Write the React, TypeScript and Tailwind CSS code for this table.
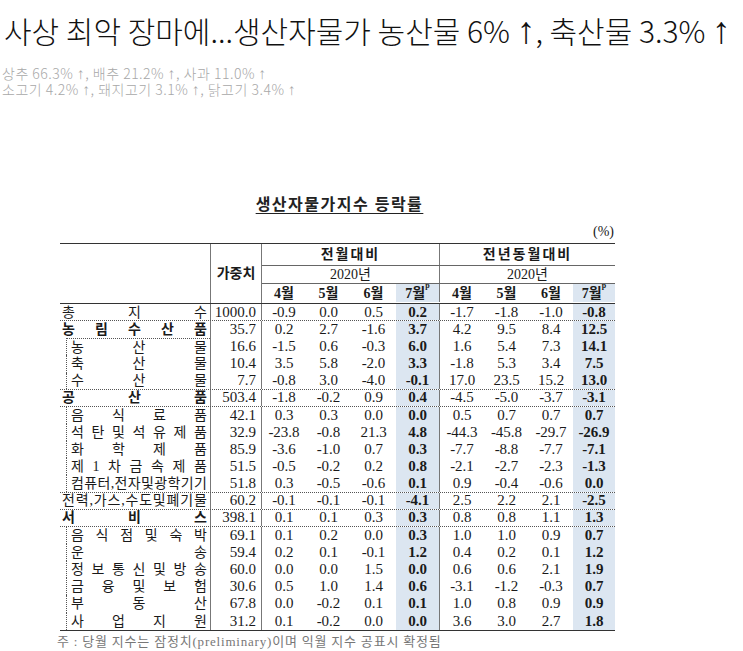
import React from "react";

type Row = {
  label: string;
  kind: "top" | "topbold" | "sub";
  w: string;
  a: string[];
  b: string[];
  sep?: boolean; // full-width dotted line below
  boxTop?: boolean; // label-only dotted top line
};

const rows: Row[] = [
  { label: "총지수", kind: "top", w: "1000.0", a: ["-0.9", "0.0", "0.5", "0.2"], b: ["-1.7", "-1.8", "-1.0", "-0.8"], sep: true },
  { label: "농림수산품", kind: "topbold", w: "35.7", a: ["0.2", "2.7", "-1.6", "3.7"], b: ["4.2", "9.5", "8.4", "12.5"] },
  { label: "농산물", kind: "sub", w: "16.6", a: ["-1.5", "0.6", "-0.3", "6.0"], b: ["1.6", "5.4", "7.3", "14.1"], boxTop: true },
  { label: "축산물", kind: "sub", w: "10.4", a: ["3.5", "5.8", "-2.0", "3.3"], b: ["-1.8", "5.3", "3.4", "7.5"] },
  { label: "수산물", kind: "sub", w: "7.7", a: ["-0.8", "3.0", "-4.0", "-0.1"], b: ["17.0", "23.5", "15.2", "13.0"], sep: true },
  { label: "공산품", kind: "topbold", w: "503.4", a: ["-1.8", "-0.2", "0.9", "0.4"], b: ["-4.5", "-5.0", "-3.7", "-3.1"], sep: true },
  { label: "음식료품", kind: "sub", w: "42.1", a: ["0.3", "0.3", "0.0", "0.0"], b: ["0.5", "0.7", "0.7", "0.7"] },
  { label: "석탄및석유제품", kind: "sub", w: "32.9", a: ["-23.8", "-0.8", "21.3", "4.8"], b: ["-44.3", "-45.8", "-29.7", "-26.9"] },
  { label: "화학제품", kind: "sub", w: "85.9", a: ["-3.6", "-1.0", "0.7", "0.3"], b: ["-7.7", "-8.8", "-7.7", "-7.1"] },
  { label: "제1차금속제품", kind: "sub", w: "51.5", a: ["-0.5", "-0.2", "0.2", "0.8"], b: ["-2.1", "-2.7", "-2.3", "-1.3"] },
  { label: "컴퓨터,전자및광학기기", kind: "sub", w: "51.8", a: ["0.3", "-0.5", "-0.6", "0.1"], b: ["0.9", "-0.4", "-0.6", "0.0"], sep: true },
  { label: "전력,가스,수도및폐기물", kind: "top", w: "60.2", a: ["-0.1", "-0.1", "-0.1", "-4.1"], b: ["2.5", "2.2", "2.1", "-2.5"], sep: true },
  { label: "서비스", kind: "topbold", w: "398.1", a: ["0.1", "0.1", "0.3", "0.3"], b: ["0.8", "0.8", "1.1", "1.3"], sep: true },
  { label: "음식점및숙박", kind: "sub", w: "69.1", a: ["0.1", "0.2", "0.0", "0.3"], b: ["1.0", "1.0", "0.9", "0.7"] },
  { label: "운송", kind: "sub", w: "59.4", a: ["0.2", "0.1", "-0.1", "1.2"], b: ["0.4", "0.2", "0.1", "1.2"] },
  { label: "정보통신및방송", kind: "sub", w: "60.0", a: ["0.0", "0.0", "1.5", "0.0"], b: ["0.6", "0.6", "2.1", "1.9"] },
  { label: "금융및보험", kind: "sub", w: "30.6", a: ["0.5", "1.0", "1.4", "0.6"], b: ["-3.1", "-1.2", "-0.3", "0.7"] },
  { label: "부동산", kind: "sub", w: "67.8", a: ["0.0", "-0.2", "0.1", "0.1"], b: ["1.0", "0.8", "0.9", "0.9"] },
  { label: "사업지원", kind: "sub", w: "31.2", a: ["0.1", "-0.2", "0.0", "0.0"], b: ["3.6", "3.0", "2.7", "1.8"] },
];

const aW = ["w-[44px]", "w-[45px]", "w-[45px]", "w-[44px]"];
const bW = ["w-[44px]", "w-[45px]", "w-[44px]", "w-[42px]"];

function Spread({ text, bold }: { text: string; bold?: boolean }) {
  const chars = Array.from(text);
  return (
    <div className={"flex w-full justify-between text-[14px] " + (bold ? "font-bold" : "")}>
      {chars.map((c, i) => (
        <span key={i}>{c}</span>
      ))}
    </div>
  );
}

function Up() {
  return <span className="font-['Liberation_Sans',sans-serif] font-normal text-[1.25em] leading-none">↑</span>;
}

function UpSmall() {
  return <span className="font-['Liberation_Sans',sans-serif] font-normal text-[1.1em] leading-none">↑</span>;
}

export default function App() {
  const serif = "font-['Liberation_Serif','Noto_Sans_CJK_KR',serif]";
  return (
    <div className="w-[743px] h-[651px] overflow-hidden bg-white text-[#1a1a1a] font-['Noto_Sans_CJK_KR','Noto_Sans',sans-serif]">
      <div className="pt-[11px]">
        <h1 className="pl-[4px] h-[38px] text-[30px] leading-[38px] font-light text-[#111] whitespace-nowrap">
          사상 최악 장마에...생산자물가 농산물 6% <Up />, 축산물 3.3% <Up />
        </h1>
        <div className="mt-[16px] pl-[2px] text-[14px] leading-[16px] tracking-[0.5px] text-[#a8a8a8] font-light whitespace-nowrap">
          <div className="h-[16px]">
            상추 66.3% <UpSmall />, 배추 21.2% <UpSmall />, 사과 11.0% <UpSmall />
          </div>
          <div className="h-[16px]">
            소고기 4.2% <UpSmall />, 돼지고기 3.1% <UpSmall />, 닭고기 3.4% <UpSmall />
          </div>
        </div>
      </div>

      <div className={"ml-[60px] w-[555px] mt-[98px] " + serif}>
        <div className="flex justify-center">
          <div className="text-[16px] leading-[20px] font-bold underline underline-offset-[3px] tracking-[1.5px] text-[#222] ml-[4px]">
            생산자물가지수 등락률
          </div>
        </div>
        <div className="mt-[9px] text-right text-[14px] leading-[16px] pr-[1px]">(%)</div>

        {/* header */}
        <div className="mt-[3px] flex border-t border-b border-[#333] text-[14px] font-bold">
          <div className="w-[151px] h-[59px] border-r border-[#777]" />
          <div className="w-[51px] h-[59px] border-r border-[#777] flex items-center justify-center">가중치</div>
          <div className="w-[353px] flex flex-col">
            <div className="h-[22px] flex border-b border-[#666]">
              <div className="w-[178px] border-r border-[#777] flex items-center justify-center tracking-[2px]">전월대비</div>
              <div className="w-[175px] flex items-center justify-center tracking-[2px]">전년동월대비</div>
            </div>
            <div className="h-[18px] flex border-b border-[#666] font-normal">
              <div className="w-[178px] border-r border-[#777] flex items-center justify-center">2020년</div>
              <div className="w-[175px] flex items-center justify-center">2020년</div>
            </div>
            <div className="h-[18px] flex">
              {["4월", "5월", "6월", "7월"].map((m, i) => (
                <div
                  key={"a" + i}
                  className={aW[i] + " flex items-center justify-center " + (i === 3 ? "bg-[#dce6f1] border-r border-[#777]" : "")}
                >
                  {m}
                  {i === 3 && <sup className="text-[8px] -mt-[6px]">p</sup>}
                </div>
              ))}
              {["4월", "5월", "6월", "7월"].map((m, i) => (
                <div key={"b" + i} className={bW[i] + " flex items-center justify-center " + (i === 3 ? "bg-[#dce6f1]" : "")}>
                  {m}
                  {i === 3 && <sup className="text-[8px] -mt-[6px]">p</sup>}
                </div>
              ))}
            </div>
          </div>
        </div>

        {/* body */}
        <div className="border-b border-[#333]">
          {rows.map((r, ri) => (
            <div
              key={ri}
              className={
                "flex h-[17.15px] text-[15px] leading-[17px] " +
                (r.sep ? "border-b border-dotted border-[#555]" : "")
              }
            >
              <div className="w-[151px] border-r border-[#777] flex">
                {r.kind === "sub" ? (
                  <div
                    className={
                      "ml-[6px] flex-1 border-l border-dotted border-[#555] pl-[4px] pr-[3px] flex items-center " +
                      (r.boxTop ? "border-t" : "")
                    }
                  >
                    <Spread text={r.label} />
                  </div>
                ) : (
                  <div className="flex-1 pl-[2px] pr-[3px] flex items-center">
                    <Spread text={r.label} bold={r.kind === "topbold"} />
                  </div>
                )}
              </div>
              <div className="w-[51px] border-r border-[#777] flex items-center justify-end pr-[5px]">{r.w}</div>
              {r.a.map((v, i) => (
                <div
                  key={"a" + i}
                  className={
                    aW[i] +
                    " flex items-center justify-center " +
                    (i === 3 ? "bg-[#dce6f1] font-bold border-r border-[#777]" : "")
                  }
                >
                  {v}
                </div>
              ))}
              {r.b.map((v, i) => (
                <div
                  key={"b" + i}
                  className={bW[i] + " flex items-center justify-center " + (i === 3 ? "bg-[#dce6f1] font-bold" : "")}
                >
                  {v}
                </div>
              ))}
            </div>
          ))}
        </div>
        <div className="mt-[2px] -ml-[3px] text-[13px] leading-[18px] text-[#777] tracking-[0.8px] whitespace-nowrap">
          주 : 당월 지수는 잠정치(preliminary)이며 익월 지수 공표시 확정됨
        </div>
      </div>
    </div>
  );
}
